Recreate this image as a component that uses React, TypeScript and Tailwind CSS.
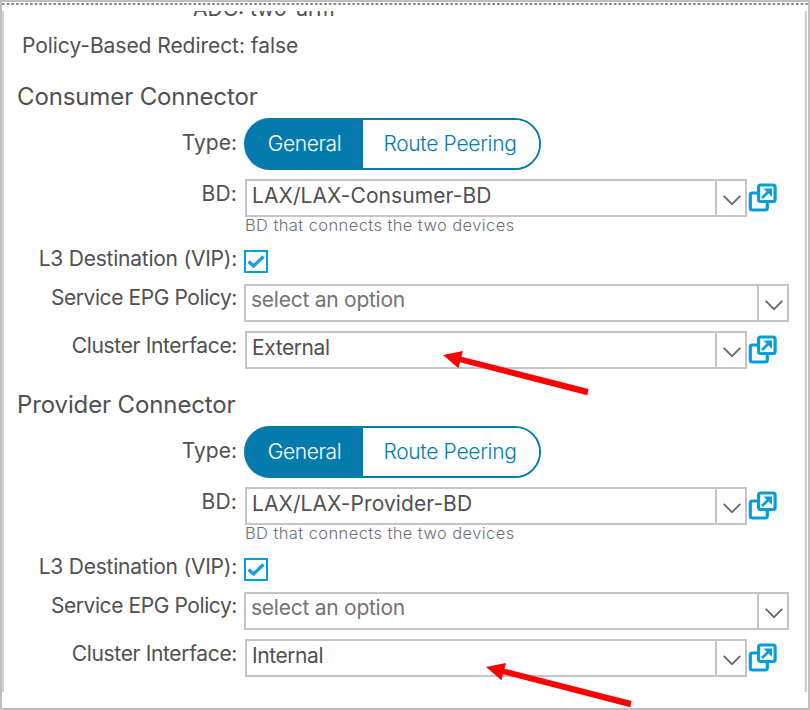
import type { ReactNode } from "react";

const label = "text-[21px] leading-6 whitespace-nowrap text-[#505053]";

function Row({ title, tracking, className, pad, children }: { title: string; tracking: string; className: string; pad: string; children: ReactNode }) {
  return (
    <div className={`flex items-start ${className}`}>
      <div className={`mr-px flex w-[237px] shrink-0 justify-end ${pad}`}>
        <span className={`${label} ${tracking}`}>{title}</span>
      </div>
      {children}
    </div>
  );
}

function OpenIcon() {
  return (
    <svg className="mt-[3px] ml-px h-[30px] w-[30px] shrink-0" viewBox="0 0 30 30" fill="none" stroke="#049fd9" strokeWidth="3.2">
      <rect x="2.3" y="11" width="17" height="17" rx="2" />
      <rect x="10.6" y="3" width="16.5" height="16.5" rx="2" fill="#fff" />
      <path d="M14 16 21.5 8.5" strokeWidth="2.6" />
      <path d="M15.5 6.5h8.5v8.5Z" fill="#049fd9" stroke="none" />
    </svg>
  );
}

function Combo({ value, tracking, wide, color }: { value: string; tracking: string; wide?: boolean; color: string }) {
  return (
    <div className={`flex h-[38px] border-2 border-[#c4c4c9] bg-white ${wide ? "ml-[6px] w-[545px]" : "ml-[7px] w-[502px]"}`}>
      <span className={`flex-1 pl-[5px] text-[21px] leading-6 whitespace-nowrap ${wide ? "pt-[2px]" : "pt-[3px]"} ${tracking} ${color}`}>{value}</span>
      <span className="flex w-[30px] shrink-0 justify-end border-l-2 border-[#c4c4c9] pt-[14px] pr-[4px]">
        <svg className="h-[11px] w-[18px]" viewBox="0 0 18 11" fill="none" stroke="#68686b" strokeWidth="1.8">
          <path d="m.7.8 8.3 8.4L17.3.8" />
        </svg>
      </span>
    </div>
  );
}

interface SectionProps {
  heading: string;
  bd: string;
  cluster: string;
}

function Connector({ heading, bd, cluster }: SectionProps) {
  return (
    <section className="flex h-[308px] flex-col">
      <h2 className="h-[46px] pt-[11px] pl-[17px] text-[24px] leading-7 tracking-[-0.12px] whitespace-nowrap text-[#505053]"><span>{heading}</span></h2>
      <Row title="Type:" tracking="tracking-[0px]" className="h-[61px]" pad="pt-[13px]">
        <div className="ml-[6px] flex h-[52px] w-[297px] overflow-hidden rounded-full border-2 border-[#057bad] bg-[linear-gradient(to_right,#057bad_50px,#fff_50px)] text-[21px] leading-[48px] font-light whitespace-nowrap">
          <span className="w-[117px] bg-[#057bad] text-center tracking-[-0.4px] text-white">General</span>
          <span className="flex-1 bg-white pr-[2px] text-center tracking-[-0.3px] text-[#057bad]">Route Peering</span>
        </div>
      </Row>
      <Row title="BD:" tracking="tracking-[0.2px]" className="h-[38px]" pad="pt-[3px]">
        <Combo value={bd} tracking="tracking-[0.08px]" color="text-[#505053]" />
        <OpenIcon />
      </Row>
      <p className="h-[33px] pl-[245px] text-[16.5px] leading-[17px] font-light tracking-[0.4px] whitespace-nowrap text-[#707073]"><span>BD that connects the two devices</span></p>
      <Row title="L3 Destination (VIP):" tracking="tracking-[-0.23px]" className="h-[34px]" pad="-mt-[3px]">
        <span className="ml-[6px] flex h-[23px] w-[24px] items-center justify-center border-2 border-[#049fd9] bg-white">
          <svg className="h-[14px] w-[18px]" viewBox="0 0 18 14" fill="none" stroke="#1a9edb" strokeWidth="3.4">
            <path d="m1.5 6.5 5 4.5L16.5 1.5" />
          </svg>
        </span>
      </Row>
      <Row title="Service EPG Policy:" tracking="tracking-[-0.42px]" className="h-[47px]" pad="pt-[2px]">
        <Combo value="select an option" tracking="tracking-[-0.25px]" wide color="text-[#737376]" />
      </Row>
      <Row title="Cluster Interface:" tracking="tracking-[-0.34px]" className="h-[38px]" pad="pt-[3px]">
        <Combo value={cluster} tracking="tracking-[-0.42px]" color="text-[#505053]" />
        <OpenIcon />
      </Row>
    </section>
  );
}

function Arrow({ className }: { className: string }) {
  return (
    <svg className={`absolute h-[46px] w-[146px] ${className}`} viewBox="0 0 146 46">
      <path fill="#fe0000" d="M0 5 20 1 18.5 6.7 145.5 39 144.3 45.3 17 12.3 15.5 18.3Z" />
    </svg>
  );
}

export default function App() {
  return (
    <div className="relative h-[710px] w-[810px] overflow-hidden border-2 border-[#bfbfbf] bg-white font-['Inter',sans-serif]">
      <div className="-mx-[2px] flex h-[9px] pt-px pl-[2px]">
        <svg className="h-[2px] w-[806px]">
          <path d="M0 1H806" stroke="#8c8c8c" strokeWidth="2" strokeDasharray="2.67 2" />
        </svg>
      </div>
      <div className="-mx-[2px] h-[681px]">
        <div className="h-[61px]">
          <div className="h-[6px] overflow-hidden pl-[193px]">
            <span className={`${label} -mt-[14px] block tracking-[0px]`}>ADC: two-arm</span>
          </div>
          <p className={`${label} pt-[17px] pl-[22px] tracking-[-0.05px]`}><span>Policy-Based Redirect: false</span></p>
        </div>
        <Connector heading="Consumer Connector" bd="LAX/LAX-Consumer-BD" cluster="External" />
        <Connector heading="Provider Connector" bd="LAX/LAX-Provider-BD" cluster="Internal" />
      </div>
      <div className="absolute top-[9px] left-0 h-[681px] w-[2px] bg-[#d2d2d2]" />
      <div className="absolute top-[9px] right-px h-[681px] w-[3px] border-l border-[#ececec] bg-[#d0d0d0]" />
      <Arrow className="top-[348px] left-[441px]" />
      <Arrow className="top-[660px] left-[484px]" />
    </div>
  );
}
